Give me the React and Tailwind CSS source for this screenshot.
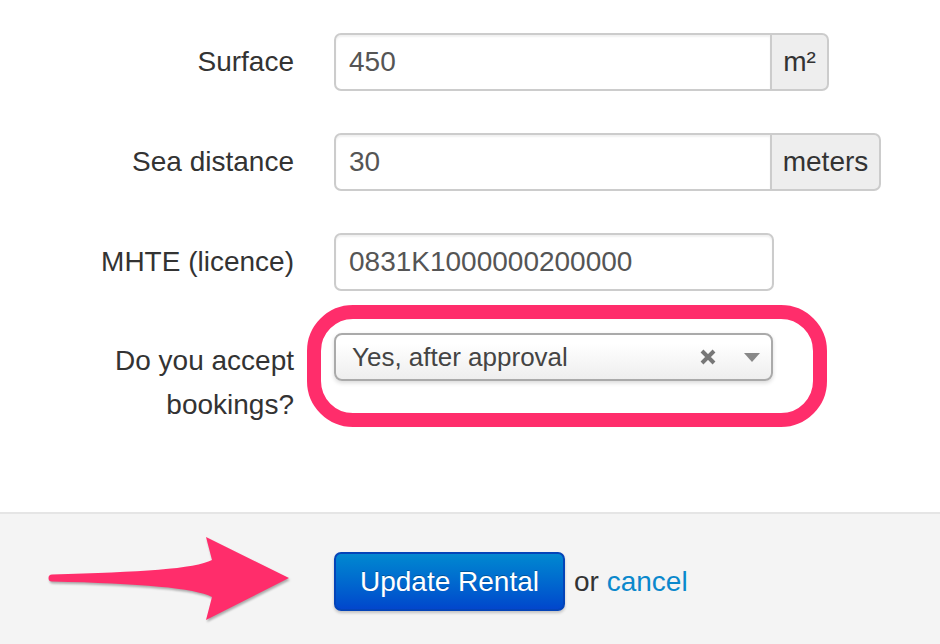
import React from "react";

const Label = ({ children, className = "" }) => (
  <div className={`w-[294px] text-right text-[28px] leading-[44px] text-[#333] ${className}`}>{children}</div>
);

const TextInput = ({ value, addon, width, addonWidth }) => (
  <div className={`flex h-[58px] ${width}`}>
    <div
      className={`flex flex-1 items-center border-2 border-[#ccc] bg-white pl-[13px] text-[28px] text-[#555] shadow-[inset_0_2px_2px_rgba(0,0,0,0.06)] ${
        addon ? "rounded-l-[7px]" : "rounded-[7px]"
      }`}
    >
      {value}
    </div>
    {addon && (
      <div
        className={`flex items-center justify-center rounded-r-[7px] border-2 border-l-0 border-[#ccc] bg-[#eee] text-[28px] text-[#333] ${addonWidth}`}
      >
        {addon}
      </div>
    )}
  </div>
);

export default function App() {
  return (
    <div className="flex h-[644px] w-[940px] flex-col bg-white font-['Liberation_Sans',Arial,sans-serif]">
      <div className="flex h-[512px] flex-col gap-[42px] pt-[33px]">
        <div className="flex items-center gap-[40px]">
          <Label>Surface</Label>
          <TextInput value="450" addon="m²" width="w-[495px]" addonWidth="w-[57px]" />
        </div>
        <div className="flex items-center gap-[40px]">
          <Label>Sea distance</Label>
          <TextInput value="30" addon="meters" width="w-[547px]" addonWidth="w-[109px]" />
        </div>
        <div className="flex items-center gap-[40px]">
          <Label>MHTE (licence)</Label>
          <TextInput value="0831K1000000200000" width="w-[440px]" />
        </div>
        <div className="flex items-start gap-[40px]">
          <Label className="mt-[6px]">
            Do you accept
            <br />
            bookings?
          </Label>
          <div className="relative">
            <div className="pointer-events-none absolute left-[-27px] top-[-28px] h-[122px] w-[520px] rounded-[46px] border-[14px] border-[#ff2d6b]" />
            <div className="flex h-[48px] w-[439px] items-center rounded-[8px] border-2 border-[#aaa] bg-gradient-to-b from-white from-20% to-[#eee] pl-[16px] pr-[11px] text-[26px] text-[#444] shadow-[0_2px_4px_rgba(0,0,0,0.15)]">
              <span className="flex-1">Yes, after approval</span>
              <svg width="16" height="16" viewBox="0 0 16 16" className="mr-[28px]">
                <path d="M2 2 L14 14 M14 2 L2 14" stroke="#777" strokeWidth="4" strokeLinecap="butt" />
              </svg>
              <svg width="16" height="9" viewBox="0 0 16 9">
                <path d="M0 0 L16 0 L8 9 Z" fill="#888" />
              </svg>
            </div>
          </div>
        </div>
      </div>

      <div className="relative flex flex-1 items-start border-t-2 border-[#e5e5e5] bg-[#f4f4f4] pl-[334px] pt-[38px]">
        <svg
          className="absolute left-0 top-[-1px] drop-shadow-[1px_2px_1px_rgba(0,0,0,0.3)]"
          width="300"
          height="131"
          viewBox="0 0 300 131"
        >
          <path
            d="M52 61.5 C 140 59, 195 56, 212 47 L 206 24 L 289 65 L 206 107 L 212 84 C 195 75, 140 70.5, 52 68.5 A 3.5 3.5 0 0 1 52 61.5 Z"
            fill="#ff2d6b"
          />
        </svg>
        <button className="h-[59px] w-[231px] rounded-[7px] border-2 border-[#0444b8] bg-gradient-to-b from-[#0688d0] to-[#0346cc] text-[28px] text-white shadow-[0_2px_3px_rgba(0,0,0,0.2)] [text-shadow:0_-1px_0_rgba(0,0,0,0.25)]">
          Update Rental
        </button>
        <div className="ml-[9px] flex h-[59px] items-center text-[28px] text-[#333]">
          or&nbsp;<span className="text-[#0a88cc]">cancel</span>
        </div>
      </div>
    </div>
  );
}
